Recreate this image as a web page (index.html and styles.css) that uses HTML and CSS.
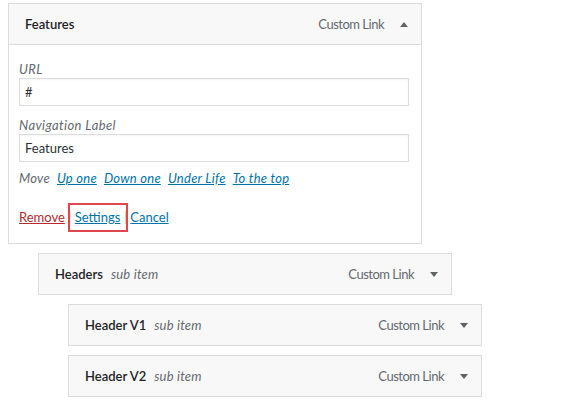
FILE: index.html
```html
<!DOCTYPE html>
<html>
<head>
<meta charset="utf-8">
<link rel="stylesheet" href="styles.css">
</head>
<body>
<div class="menu">
  <div class="item open">
    <div class="item-bar">
      <span class="item-title">Features</span>
      <span class="item-type">Custom Link</span>
      <span class="arrow up"></span>
    </div>
    <div class="item-settings">
      <div class="field">
        <label class="field-label">URL</label>
        <div class="input">#</div>
      </div>
      <div class="field">
        <label class="field-label">Navigation Label</label>
        <div class="input">Features</div>
      </div>
      <div class="move">
        <span class="move-label">Move</span>
        <a class="link">Up one</a>
        <a class="link">Down one</a>
        <a class="link">Under Life</a>
        <a class="link">To the top</a>
      </div>
      <div class="actions"><a class="remove">Remove</a> <span class="sep">|</span> <a class="link highlight">Settings</a> <span class="sep">|</span> <a class="link">Cancel</a></div>
    </div>
  </div>

  <div class="item depth-1">
    <div class="item-bar">
      <span class="item-title">Headers</span>
      <span class="sub">sub item</span>
      <span class="item-type">Custom Link</span>
      <span class="arrow"></span>
    </div>
  </div>

  <div class="item depth-2">
    <div class="item-bar">
      <span class="item-title">Header V1</span>
      <span class="sub">sub item</span>
      <span class="item-type">Custom Link</span>
      <span class="arrow"></span>
    </div>
  </div>

  <div class="item depth-2">
    <div class="item-bar">
      <span class="item-title">Header V2</span>
      <span class="sub">sub item</span>
      <span class="item-type">Custom Link</span>
      <span class="arrow"></span>
    </div>
  </div>
</div>
</body>
</html>
```

FILE: styles.css
```css
* { box-sizing: border-box; }

body {
  margin: 0;
  background: #fff;
  font-family: "Lato", "Open Sans", sans-serif;
  font-size: 13px;
  color: #1d2327;
}

.menu {
  padding: 3px 0 0 8px;
  display: flex;
  flex-direction: column;
  gap: 9px;
}

.item {
  width: 414px;
  border: 1px solid #dcdcde;
  background: #fff;
}

.depth-1 { margin-left: 30px; }
.depth-2 { margin-left: 60px; }

.item-bar {
  height: 40px;
  background: #f8f8f8;
  display: flex;
  align-items: center;
  padding: 0 13px 0 16px;
}

.open .item-bar {
  border-bottom: 1px solid #dcdcde;
  height: 41px;
}

.item-title {
  font-weight: 600;
  color: #1d2327;
}

.sub {
  font-style: italic;
  color: #646970;
  margin-left: 8px;
  letter-spacing: 0.2px;
}

.item-type {
  margin-left: auto;
  color: #646970;
  letter-spacing: -0.5px;
}

.arrow {
  width: 0;
  height: 0;
  margin-left: 16px;
  border-left: 4px solid transparent;
  border-right: 4px solid transparent;
  border-top: 5px solid #5f6368;
}

.arrow.up {
  border-top: 0;
  border-bottom: 5px solid #5f6368;
}

.item-settings {
  padding: 15px 12px 17px 10px;
}

.field-label {
  display: block;
  font-style: italic;
  color: #646970;
  line-height: 18px;
  letter-spacing: 0.4px;
}

.field + .field { margin-top: 10px; }

.input {
  height: 28px;
  border: 1px solid #dcdcde;
  box-shadow: inset 0 1px 2px rgba(0,0,0,0.04);
  padding: 0 5px;
  display: flex;
  align-items: center;
  color: #2c3338;
}

.move {
  margin-top: 7px;
  line-height: 18px;
  display: flex;
  gap: 7px;
  letter-spacing: 0.25px;
}

.move-label {
  font-style: italic;
  color: #646970;
}

.link {
  color: #0073aa;
  text-decoration: underline;
}

.move .link { font-style: italic; }

.actions {
  margin-top: 21px;
  line-height: 18px;
}

.remove {
  color: #b32d2e;
  text-decoration: underline;
}

.sep { color: #d9c79a; }

.highlight {
  position: relative;
}

.highlight::after {
  content: "";
  position: absolute;
  left: -7px;
  right: -8px;
  top: -6px;
  bottom: -7px;
  border: 2px solid #e0474c;
}
```
